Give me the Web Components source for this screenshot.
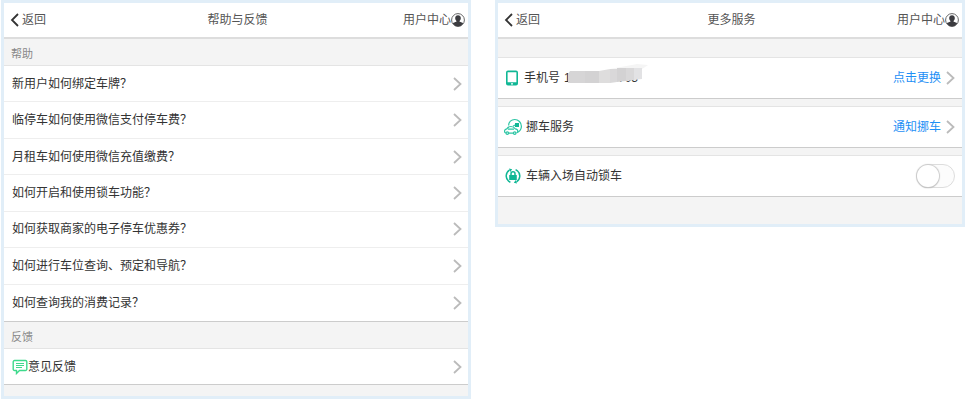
<!DOCTYPE html>
<html lang="zh-CN">
<head>
<meta charset="utf-8">
<meta name="viewport" content="width=device-width, initial-scale=1">
<title>用户中心</title>
<style>
  body {
    margin: 0;
    background: #fff;
    color: #333;
    font: 12px/16px "Liberation Sans", "Noto Sans CJK SC", sans-serif;
  }

  main {
    display: grid;
    grid-template-columns: 1fr 1fr;
    align-items: start;
    gap: 24px;
    padding: 0 1px;
  }
</style>
</head>
<body>
<main>
  <app-screen heading="帮助与反馈">
    <section-title>帮助</section-title>
    <row-list class="questions">
      <link-row>新用户如何绑定车牌？</link-row>
      <link-row>临停车如何使用微信支付停车费？</link-row>
      <link-row>月租车如何使用微信充值缴费？</link-row>
      <link-row>如何开启和使用锁车功能？</link-row>
      <link-row>如何获取商家的电子停车优惠券？</link-row>
      <link-row>如何进行车位查询、预定和导航？</link-row>
      <link-row>如何查询我的消费记录？</link-row>
    </row-list>
    <section-title>反馈</section-title>
    <row-list>
      <link-row><app-icon slot="icon" name="comment"></app-icon>意见反馈</link-row>
    </row-list>
  </app-screen>

  <app-screen heading="更多服务" class="services">
    <service-row action="点击更换">
      <app-icon slot="icon" name="phone"></app-icon>
      手机号
      <masked-number slot="value" start="1" end="703"></masked-number>
    </service-row>
    <service-row action="通知挪车">
      <app-icon slot="icon" name="move-car"></app-icon>
      挪车服务
    </service-row>
    <switch-row>
      <app-icon slot="icon" name="lock"></app-icon>
      车辆入场自动锁车
    </switch-row>
  </app-screen>
</main>

<script>
const icons = {
  back: `<svg width="9" height="14" viewBox="0 0 9 14"><path d="M8 1L2 7l6 6" fill="none" stroke="#333" stroke-width="1.8"/></svg>`,
  next: `<svg width="9" height="14" viewBox="0 0 9 14"><path d="M1 1l6.5 6L1 13" fill="none" stroke="#bbb" stroke-width="1.8"/></svg>`,
  user: `<svg width="14" height="14" viewBox="0 0 14 14">
    <circle cx="7" cy="7" r="6.4" fill="#fff" stroke="#666" stroke-width="1"/>
    <path d="M7 2.2c1.8 0 2.8 1.2 2.8 2.9 0 1.3-.5 2.2-1.2 2.9v.8c1.5.4 3 .8 3.6 1.7A6.3 6.3 0 0 1 7 13.4a6.3 6.3 0 0 1-5.2-2.9c.6-.9 2.1-1.3 3.6-1.7V8c-.7-.7-1.2-1.6-1.2-2.9C4.2 3.4 5.2 2.2 7 2.2z" fill="#3c3c40"/></svg>`,
  comment: `<svg width="16" height="16" viewBox="0 0 16 16" fill="none" stroke="#3ed98c">
    <path d="M2.5 1.5h11a1.3 1.3 0 0 1 1.3 1.3v7.4a1.3 1.3 0 0 1-1.3 1.3H7.5L4.5 14.5v-3h-2A1.3 1.3 0 0 1 1.2 10.2V2.8A1.3 1.3 0 0 1 2.5 1.5z" stroke-width="1.4"/>
    <path d="M4 4.5h8M4 6.5h8M4 8.5h6"/></svg>`,
  phone: `<svg width="16" height="18" viewBox="0 0 16 18">
    <path fill="#10b795" fill-rule="evenodd" d="M4 1.5h8a2 2 0 0 1 2 2v11a2 2 0 0 1-2 2H4a2 2 0 0 1-2-2v-11a2 2 0 0 1 2-2zM3.6 3.3v10h8.800v-10zM7 14.2v1.2h2v-1.2z"/></svg>`,
  "move-car": `<svg width="18" height="18" viewBox="0 0 18 18" fill="none" stroke="#2cc5a4" stroke-width="1.2">
    <path d="M4.6 7.5C4.6 4 7.3 1.5 10.7 1.5a6.7 6.7 0 0 1 6.7 6.7c0 2.8-1.5 4.9-3.6 6"/>
    <path d="M1.8 15C.6 14.7.4 13.6.6 12.6c.2-1 1-1.5 2.2-1.7C3.7 9.2 5 8.5 7 8.5c2.2 0 3.4 1 4.3 2.4 1.6.2 2.5 1 2.5 2.3 0 1-.5 1.6-1.3 1.8M4.7 15.2h4.6M4 11.2h6"/>
    <circle cx="3.3" cy="15.1" r="1.3"/><circle cx="10.7" cy="15.1" r="1.3"/>
    <path d="M11 5h4v4h-4z" fill="#10b795" stroke="none"/><path d="M9 8.3l2-1.3"/></svg>`,
  lock: `<svg width="18" height="18" viewBox="0 0 18 18" fill="none" stroke="#10b795" stroke-width="1.5">
    <path d="M5.5 3.2A6.8 6.8 0 0 0 4.6 14.2l1.8 1.1M12.5 14.8a6.8 6.8 0 0 0 .9-11l-1.8-1.1"/>
    <path d="M5 1.6l3.2.7-2 2.7zM13 16.4l-3.2-.7 2-2.7z" fill="#10b795" stroke="none"/>
    <path d="M7 8V6.8a2 2 0 0 1 4 0V8"/>
    <path d="M5.2 8h7.6v5H5.2z" fill="#10b795" stroke="none"/></svg>`
};

function render(element, markup) {
  const template = document.createElement('template');
  template.innerHTML = markup;
  element.attachShadow({ mode: 'open' }).appendChild(template.content.cloneNode(true));
}

class AppIcon extends HTMLElement {
  constructor() {
    super();
    render(this, `
      <style>
        :host { display: block; flex: none; }
        svg { display: block; }
      </style>
      ${icons[this.getAttribute('name')] || ''}
    `);
  }
}

class AppScreen extends HTMLElement {
  constructor() {
    super();
    render(this, `
      <style>
        :host {
          display: block;
          min-width: 0;
          background: #f4f4f4;
          border: 3px solid #e1eef8;
          padding-bottom: 11px;
        }

        :host(.services) { padding-bottom: 27px; }

        header {
          display: grid;
          grid-template-columns: 1fr auto 1fr;
          align-items: center;
          height: 34px;
          padding: 0 3px 0 6px;
          background: #fff;
          border-bottom: 2px solid #ddd;
          color: #555;
        }

        h1 { margin: 0; font-size: 12px; font-weight: normal; }

        a {
          display: flex;
          align-items: center;
          color: inherit;
          text-decoration: none;
        }

        .back { justify-self: start; gap: 3px; }
        .user { justify-self: end; }

        .content { display: block; }

        :host(.services) .content {
          display: grid;
          gap: 7px;
          padding-top: 18px;
        }
      </style>

      <header>
        <a class="back" href="#back"><app-icon name="back"></app-icon>返回</a>
        <h1>${this.getAttribute('heading')}</h1>
        <a class="user" href="#user">用户中心<app-icon name="user"></app-icon></a>
      </header>
      <div class="content"><slot></slot></div>
    `);
  }
}

class SectionTitle extends HTMLElement {
  constructor() {
    super();
    render(this, `
      <style>
        :host { display: block; padding: 7px 7px 3px; color: #888; }
        h2 { margin: 0; font-size: 11px; font-weight: normal; }
      </style>
      <h2><slot></slot></h2>
    `);
  }
}

class RowList extends HTMLElement {
  constructor() {
    super();
    render(this, `
      <style>
        :host {
          display: grid;
          grid-auto-rows: 1fr;
          border-top: 1px solid #e4e4e4;
          border-bottom: 1px solid #ccc;
          background: #fff;
        }

        :host(.questions) { min-height: 255px; }
        ::slotted(:not(:last-child)) { border-bottom: 1px solid #eee; }
      </style>
      <slot></slot>
    `);
  }
}

class LinkRow extends HTMLElement {
  constructor() {
    super();
    render(this, `
      <style>
        :host { display: grid; min-height: 35px; }

        a {
          display: flex;
          align-items: center;
          padding: 0 6px 0 8px;
          color: inherit;
          text-decoration: none;
        }

        .label { flex: 1; }
      </style>
      <a href="#detail">
        <slot name="icon"></slot>
        <span class="label"><slot></slot></span>
        <app-icon name="next"></app-icon>
      </a>
    `);
  }
}

const serviceStyles = `
  :host {
    display: flex;
    align-items: center;
    gap: 4px;
    min-height: 42px;
    padding: 0 7px 0 6px;
    background: #fff;
    border-top: 1px solid #e4e4e4;
    border-bottom: 1px solid #ccc;
    box-sizing: border-box;
  }
`;

class ServiceRow extends HTMLElement {
  constructor() {
    super();
    render(this, `
      <style>
        ${serviceStyles}

        a {
          display: flex;
          align-items: center;
          gap: 5px;
          margin-left: auto;
          color: #1e8ff5;
          text-decoration: none;
        }
      </style>
      <slot name="icon"></slot>
      <span><slot></slot></span>
      <slot name="value"></slot>
      <a href="#action">${this.getAttribute('action')}<app-icon name="next"></app-icon></a>
    `);
  }
}

class SwitchRow extends HTMLElement {
  constructor() {
    super();
    render(this, `
      <style>
        ${serviceStyles}

        label { flex: 1; }

        input {
          appearance: none;
          width: 39px;
          height: 24px;
          margin: 0;
          border: 1px solid #ddd;
          border-radius: 12px;
          background: #fcfcfc;
        }

        input::before {
          content: "";
          display: block;
          width: 22px;
          height: 22px;
          border-radius: 50%;
          background: #fff;
          box-shadow: 0 0 1px 1px #ccc, 0 1px 1px #999;
        }

        input:checked { background: #1abc9c; }
        input:checked::before { margin-left: auto; }
      </style>
      <slot name="icon"></slot>
      <label for="auto-lock"><slot></slot></label>
      <input id="auto-lock" type="checkbox" role="switch" aria-label="车辆入场自动锁车">
    `);
  }
}

class MaskedNumber extends HTMLElement {
  constructor() {
    super();
    render(this, `
      <style>
        :host {
          display: flex;
          justify-content: space-between;
          position: relative;
          width: 74px;
        }

        /* blocks that hide the middle digits */
        svg { position: absolute; left: 3px; top: -7px; }
      </style>
      <span>${this.getAttribute('start')}</span>
      <span>${this.getAttribute('end')}</span>
      <svg width="82" height="22" viewBox="0 0 82 22" aria-hidden="true">
        <path d="M43 6L70 1l11 1-6 4z" fill="#f5f5f5"/>
        <path d="M3 8h15v12H1v-9z" fill="#d6d5d6"/>
        <path d="M18 8h14v12H18z" fill="#d3d2d3"/>
        <path d="M32 8l11-2v14H32z" fill="#dedddd"/>
        <path d="M43 6h7v13l-7 1z" fill="#d9d8d9"/>
        <path d="M50 5h9v13l-9 1z" fill="#d3d2d3"/>
        <path d="M59 5h8v12l-8 1z" fill="#d9d8d9"/>
        <path d="M67 5h8v11l-8 1z" fill="#e2e2e4"/>
      </svg>
    `);
  }
}

customElements.define('app-icon', AppIcon);
customElements.define('app-screen', AppScreen);
customElements.define('section-title', SectionTitle);
customElements.define('row-list', RowList);
customElements.define('link-row', LinkRow);
customElements.define('service-row', ServiceRow);
customElements.define('switch-row', SwitchRow);
customElements.define('masked-number', MaskedNumber);
</script>
</body>
</html>
